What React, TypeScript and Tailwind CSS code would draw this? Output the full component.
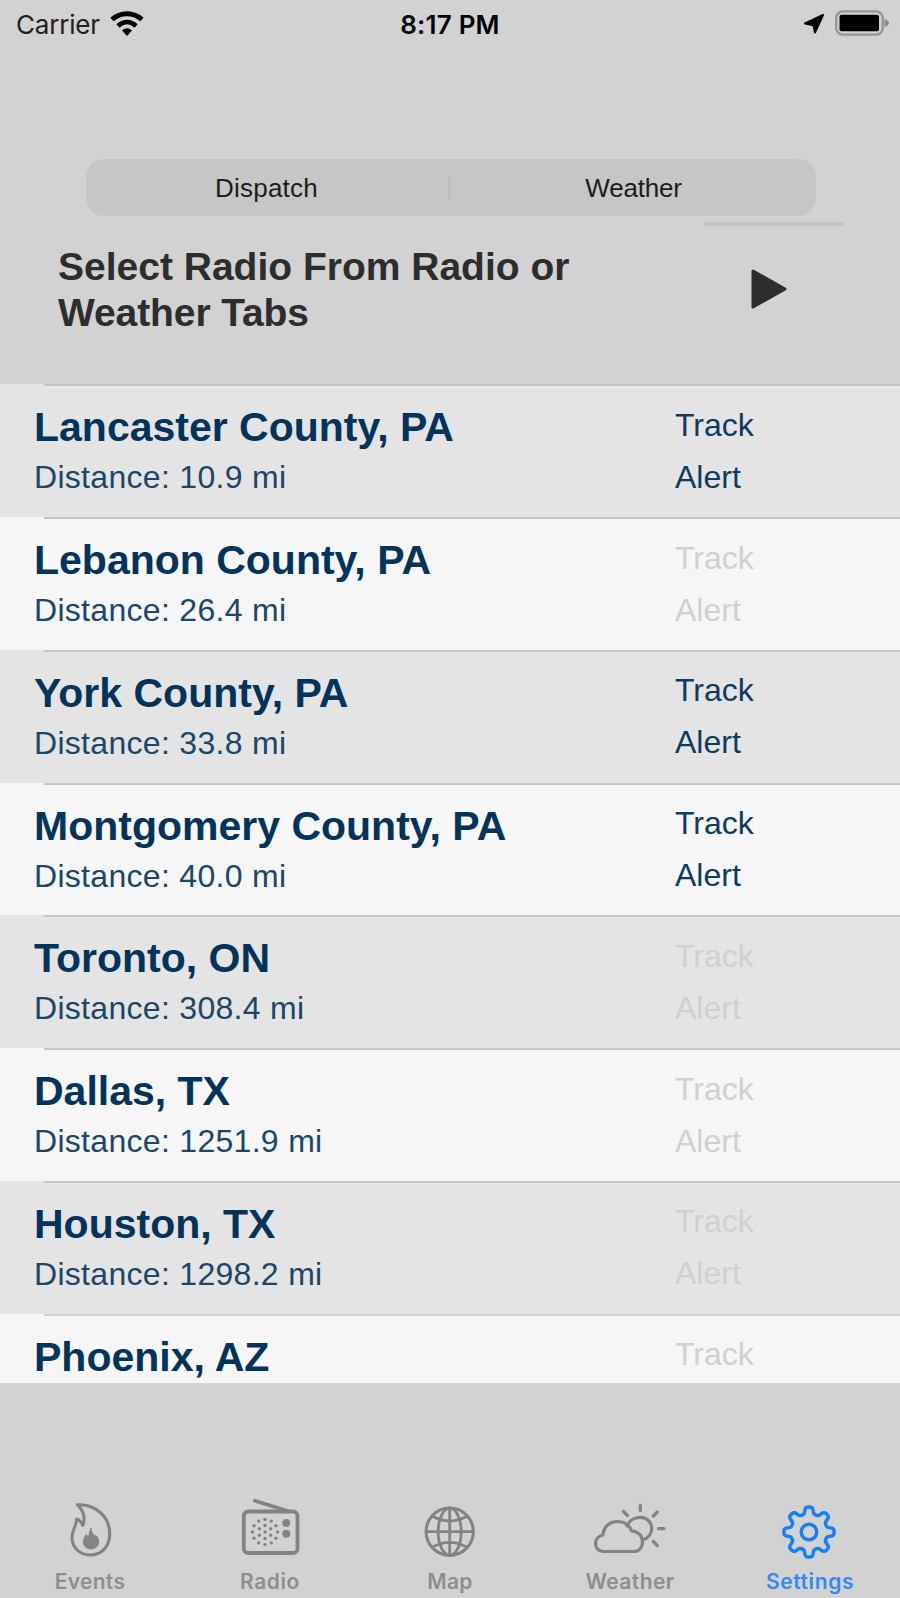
import React from 'react';

const counties = [
  { name: 'Lancaster County, PA', distance: '10.9 mi', active: true },
  { name: 'Lebanon County, PA', distance: '26.4 mi', active: false },
  { name: 'York County, PA', distance: '33.8 mi', active: true },
  { name: 'Montgomery County, PA', distance: '40.0 mi', active: true },
  { name: 'Toronto, ON', distance: '308.4 mi', active: false },
  { name: 'Dallas, TX', distance: '1251.9 mi', active: false },
  { name: 'Houston, TX', distance: '1298.2 mi', active: false },
];

const ring = (count: number, radius: number) =>
  Array.from({ length: count }, (_, i) => {
    const a = (i / count) * Math.PI * 2;
    return { x: 35 + radius * Math.sin(a), y: 34 - radius * Math.cos(a) };
  });

const speakerDots = [{ x: 35, y: 34 }, ...ring(6, 6.5), ...ring(12, 12.6)];

// Eight rounded teeth around the centre
const gearPath =
  Array.from({ length: 240 }, (_, i) => {
    const a = (i / 240) * Math.PI * 2;
    const r = 21.7 + 3.5 * Math.tanh(2 * Math.cos(8 * a));
    return `${i ? 'L' : 'M'}${(39 + r * Math.sin(a)).toFixed(2)} ${(34 - r * Math.cos(a)).toFixed(2)}`;
  }).join('') + 'Z';

const FlameIcon = () => (
  <>
    <path d="M27.5 6.8C46 6 59.7 19 59.7 36C59.7 49 51 57 40.500 57C29.500 57 22 49.500 22 39.500C22 31.500 26.500 29 26.500 21C30 22 31.800 24.500 32.800 27.500C35.500 20 33.500 12.500 27.500 6.800Z" strokeWidth="3.100" />
    <path d="M41 30.500C41.300 34 43.300 36 44.300 38.500L45.300 37C47.800 38.500 48.800 40.800 48.800 43.500C48.800 48 45.500 51 41 51C36.500 51 33.200 48 33.200 43.500C33.200 40.500 35.300 39 35.800 36.500C37 37 37.800 38 38.200 39C39.800 36.500 39 33 41 30.500Z" fill="currentColor" strokeWidth="0.800" />
  </>
);

const RadioIcon = () => (
  <>
    <rect x="13.800" y="13.500" width="53.700" height="41.500" rx="4.500" strokeWidth="3.800" />
    <path d="M24.800 2.800L57 12.800" strokeWidth="3.600" />
    {speakerDots.map((d, i) => (
      <circle key={i} cx={d.x} cy={d.y} r="1.700" fill="currentColor" stroke="none" />
    ))}
    <circle cx="56.300" cy="25" r="4" fill="currentColor" stroke="none" />
    <circle cx="56.300" cy="35.700" r="4" fill="currentColor" stroke="none" />
  </>
);

const GlobeIcon = () => (
  <>
    <circle cx="39.700" cy="33.700" r="23.600" strokeWidth="3" />
    <ellipse cx="39.700" cy="33.700" rx="11.500" ry="23.600" strokeWidth="2.800" />
    <path d="M39.700 10V57.400M16 33.700H63.400M22 18Q39.700 28 57.400 18M22 49.400Q39.700 39.400 57.400 49.400" strokeWidth="2.800" />
  </>
);

const CloudIcon = () => (
  <>
    <path d="M13 53.500H43C49 53.500 52.500 49.500 52.500 44C52.500 37.500 48 33.500 41.500 32.800C39.500 27.500 34.500 23.500 27.500 23.500C19.500 23.500 13.500 29 13 37C8.500 38 5.500 41.500 5.500 45.500C5.500 50 8.500 53.500 13 53.500Z" strokeWidth="3.200" />
    <path d="M37 28C39 22.500 44.500 19.300 50.500 19.300C57 19.300 61.700 24.500 61.700 30.500C61.700 36 58 40.500 53 41.500" strokeWidth="3.200" />
    <path d="M50.300 7V12.500M33.500 13.500L37.500 17.500M67.300 14L63.300 18M68.500 30.700H74M63.300 43.500L67.300 47.500" strokeWidth="3.200" />
  </>
);

const GearIcon = () => (
  <>
    <path d={gearPath} strokeWidth="3.500" />
    <circle cx="39" cy="34" r="7.800" strokeWidth="3.500" />
  </>
);

const tabs = [
  { label: 'Events', icon: <FlameIcon />, className: 'text-[#838383]', labelClass: 'tracking-[0.300px]' },
  { label: 'Radio', icon: <RadioIcon />, className: 'text-[#838383]', labelClass: 'tracking-[0.6px]' },
  { label: 'Map', icon: <GlobeIcon />, className: 'text-[#838383]', labelClass: 'tracking-[0.3px]' },
  { label: 'Weather', icon: <CloudIcon />, className: 'text-[#838383]', labelClass: 'tracking-[0.4px]' },
  { label: 'Settings', icon: <GearIcon />, className: 'text-[#147efb]', labelClass: 'tracking-[0.6px]' },
];

const StatusBar = () => (
  <header className="grid h-12 grid-cols-3 items-center pl-4 pr-[11px] font-['Inter',sans-serif] text-[26px] text-black">
    <div className="flex items-center gap-[10px]">
      <span className="tracking-[-0.2px] text-[#202020]">Carrier</span>
      <svg className="-mt-[3px] h-[26px] w-[34px]" viewBox="0 0 34 26" fill="none" stroke="black">
        <path d="M2 9.500C10.500 1.700 23.500 1.700 32 9.500" strokeWidth="5" />
        <path d="M8 16C13.500 10.800 20.500 10.800 26 16" strokeWidth="4.800" />
        <path d="M12 20.500Q17 16 22 20.500L17 26Z" fill="black" stroke="none" />
      </svg>
    </div>
    <div className="-ml-[5px] text-center font-semibold tracking-[0.2px]">8:17 PM</div>
    <div className="flex items-center justify-end gap-[11px]">
      <svg className="h-5 w-5" viewBox="0 0 20 20" fill="black">
        <path d="M19 1L11 18.500L9.500 11.200L1 9.500Z" stroke="black" strokeWidth="2" strokeLinejoin="round" />
      </svg>
      <svg className="-mt-[3px] h-[26px] w-[54px]" viewBox="0 0 54 26">
        <rect x="1.200" y="1.400" width="46.600" height="23.200" rx="6.500" fill="none" stroke="#969696" strokeWidth="2.400" />
        <rect x="4.500" y="4.800" width="39.500" height="16.500" rx="2" fill="black" />
        <path d="M49.500 9Q54 10.500 54 13Q54 15.500 49.500 17Z" fill="#8c8c8c" />
      </svg>
    </div>
  </header>
);

const App = () => {
  return (
    <div className="flex h-[1598px] w-[900px] flex-col overflow-hidden bg-[#d2d2d2] font-['Liberation_Sans',Arial,sans-serif]">
      <StatusBar />

      {/* Radio source picker */}
      <div className="relative ml-[86px] mt-[111px] grid h-[57px] w-[730px] shrink-0 grid-cols-2 items-center rounded-[18px] bg-[#c6c6c6] pt-0.5 text-center text-[26px] text-[#1c1c1c]">
        <span className="-ml-1 tracking-[0.2px]">Dispatch</span>
        <span className="tracking-[-0.2px]">Weather</span>
        <span className="absolute left-[362px] top-[17px] h-6 w-[2px] bg-[#bdbdbd]"></span>
      </div>
      <div className="ml-[704px] mt-[6px] h-1 w-[140px] shrink-0 bg-[#c5c5c5]"></div>

      {/* Player */}
      <section className="flex h-[158.400px] shrink-0 items-start justify-between pl-[58px] pr-[113px] pt-[18px] text-[#2d2d2d]">
        <h1 className="text-[39px] font-bold leading-[46px]">
          <span className="block">Select Radio From Radio or</span>
          <span className="block tracking-[-0.1px]">Weather Tabs</span>
        </h1>
        <svg className="mt-[25px] h-10 w-9" viewBox="0 0 36 40" fill="currentColor">
          <path d="M2 2L34 20L2 38Z" stroke="currentColor" strokeWidth="3" strokeLinejoin="round" />
        </svg>
      </section>

      {/* County list */}
      <main className="flex h-[998.600px] shrink-0 flex-col overflow-hidden text-[#02335a]">
        {counties.map((county) => (
          <div key={county.name} className="relative flex h-[132.750px] shrink-0 pl-[34px] odd:bg-[#e4e4e4] even:bg-[#f6f6f6]">
            <span className="absolute left-11 right-0 top-0 h-[2px] bg-[#c5c5c5]"></span>
            <div className="w-[641px] pt-[20px]">
              <h2 className="text-[41px] font-bold leading-[46px]">{county.name}</h2>
              <p className="mt-[9px] text-[32px] leading-9 tracking-[0.3px] text-[#1b4668]">Distance: {county.distance}</p>
            </div>
            <div className={county.active ? 'pt-[22.500px] text-[32px] leading-9 text-[#0d3b60]' : 'pt-[22.500px] text-[32px] leading-9 text-[#d0d0d0]'}>
              <p>Track</p>
              <p className="mt-4">Alert</p>
            </div>
          </div>
        ))}
        <div className="relative flex flex-1 bg-[#f6f6f6] pl-[34px]">
          <span className="absolute left-11 right-0 top-0 h-[2px] bg-[#d0d0d0]"></span>
          <h2 className="w-[641px] pt-5 text-[41px] font-bold leading-[46px]">Phoenix, AZ</h2>
          <p className="pt-[22.500px] text-[32px] leading-9 text-[#d0d0d0]">Track</p>
        </div>
      </main>

      {/* Bottom tab bar */}
      <nav className="mt-auto grid h-[100px] shrink-0 grid-cols-5 font-['Inter',sans-serif]">
        {tabs.map((tab) => (
          <div key={tab.label} className={tab.className}>
            <svg className="mx-auto block h-16 w-20" viewBox="0 0 80 64" fill="none" stroke="currentColor" strokeLinecap="round" strokeLinejoin="round">
              {tab.icon}
            </svg>
            <div className="mt-2 text-center text-[21px] font-semibold leading-6 opacity-85">
              <span className={tab.labelClass}>{tab.label}</span>
            </div>
          </div>
        ))}
      </nav>
    </div>
  );
};

export default App;
